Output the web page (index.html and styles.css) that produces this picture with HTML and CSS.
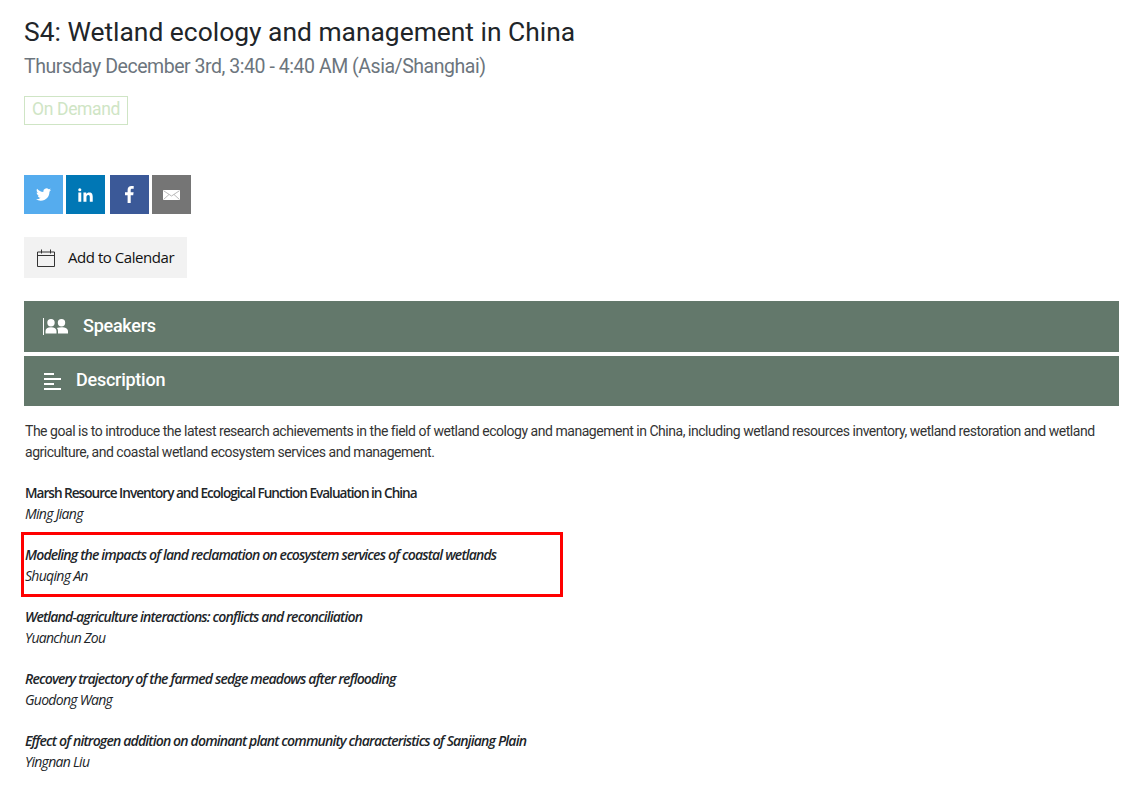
FILE: index.html
```html
<!DOCTYPE html>
<html lang="en">
<head>
  <meta charset="UTF-8">
  <title>S4: Wetland ecology and management in China</title>
  <link rel="stylesheet" href="styles.css">
</head>
<body>
  <div class="session">
    <h1 class="session-title">S4: Wetland ecology and management in China</h1>
    <p class="session-time">Thursday December 3rd, 3:40 - 4:40 AM (Asia/Shanghai)</p>
    <div><span class="tag">On Demand</span></div>

    <!-- Share buttons -->
    <div class="share">
      <a class="share-btn twitter" href="#">
        <svg viewBox="0 0 24 20" width="15" height="13"><path fill="#fff" d="M24 2.400c-.9.400-1.800.6-2.800.8 1-.6 1.800-1.600 2.200-2.700-1 .6-2 1-3.100 1.200A4.900 4.900 0 0 0 11.900 6.100C7.800 5.900 4.200 4 1.700.9c-1.300 2.200-.6 5.100 1.500 6.500-.8 0-1.500-.2-2.200-.6 0 2.300 1.600 4.400 3.900 4.900-.7.200-1.500.2-2.200.1.600 2 2.400 3.400 4.600 3.400A9.900 9.900 0 0 1 0 17.700 13.900 13.900 0 0 0 7.500 20c9.100 0 14.300-7.700 14-14.600 1-.7 1.800-1.600 2.500-3z"/></svg>
      </a>
      <a class="share-btn linkedin" href="#">
        <svg viewBox="0 0 22 20" width="15" height="14"><path fill="#fff" d="M.5 6.500h4.300V20H.5zM2.650 0a2.300 2.300 0 1 1 0 4.600 2.300 2.300 0 0 1 0-4.600zM8 6.500h4.100v1.900c.7-1.200 2.200-2.200 4.400-2.200 4.300 0 5.100 2.800 5.100 6.500V20h-4.300v-6.500c0-1.600-.1-3.600-2.200-3.600s-2.700 1.700-2.700 3.500V20H8z"/></svg>
      </a>
      <a class="share-btn facebook" href="#">
        <svg viewBox="0 0 9 17" width="9" height="17"><path fill="#fff" d="M2.600 17V9.300H0V6.300h2.600V4C2.600 1.500 4.100 0 6.500 0c1 0 1.900.1 2.200.1v2.700H7.200c-1.200 0-1.500.6-1.500 1.400v2.100h2.900l-.4 3H5.700V17z"/></svg>
      </a>
      <a class="share-btn email" href="#">
        <svg viewBox="0 0 17 10" width="17" height="10"><path fill="#fff" d="M0 0h17v10H0z"/><path fill="none" stroke="#a8a8a8" stroke-width=".8" d="M.5 .7 8.500 6 16.500 .7M.5 9.500 6 4.500M16.500 9.500 11 4.500"/></svg>
      </a>
    </div>

    <a class="calendar-btn" href="#">
      <svg viewBox="0 0 18 18" width="18" height="18"><path fill="none" stroke="#333" stroke-width="1" d="M.5 3h17v14.500H.5zM.5 6.500h17M4.500 .5v4M13.500 .5v4"/></svg>
      <span>Add to Calendar</span>
    </a>

    <!-- Collapsible sections -->
    <div class="panel-head speakers">
      <svg viewBox="0 0 25 17" width="25" height="17"><path fill="#fff" d="M0 0h1v17H0zM8 1a3.700 3.700 0 1 1 0 7.400A3.700 3.700 0 0 1 8 1zM18.500 1a3.700 3.700 0 1 1 0 7.400 3.700 3.700 0 0 1 0-7.400zM2.500 15.500V13c0-2.300 2-3.800 5.500-3.800s5.500 1.500 5.500 3.800v2.500zM15 15.500V13c0-1.300-.4-2.300-1.100-3.100 1.200-.5 2.800-.7 4.600-.7 3.800 0 6.500 1.400 6.500 3.800v2.500z"/></svg>
      <span>Speakers</span>
    </div>
    <div class="panel-head description">
      <svg viewBox="0 0 18 17" width="18" height="17"><path fill="#fff" d="M0 0h10v2H0zM0 5h17v2H0zM0 10h10v2H0zM0 15h17v2H0z"/></svg>
      <span>Description</span>
    </div>

    <div class="panel-body">
      <p class="intro">The goal is to introduce the latest research achievements in the field of wetland ecology and management in China, including wetland resources inventory, wetland restoration and wetland agriculture, and coastal wetland ecosystem services and management.</p>

      <div class="talk">
        <div class="talk-title">Marsh Resource Inventory and Ecological Function Evaluation in China</div>
        <div class="talk-author">Ming Jiang</div>
      </div>
      <div class="talk highlighted">
        <div class="talk-title slanted">Modeling the impacts of land reclamation on ecosystem services of coastal wetlands</div>
        <div class="talk-author">Shuqing An</div>
      </div>
      <div class="talk">
        <div class="talk-title slanted">Wetland-agriculture interactions: conflicts and reconciliation</div>
        <div class="talk-author">Yuanchun Zou</div>
      </div>
      <div class="talk">
        <div class="talk-title slanted">Recovery trajectory of the farmed sedge meadows after reflooding</div>
        <div class="talk-author">Guodong Wang</div>
      </div>
      <div class="talk">
        <div class="talk-title slanted">Effect of nitrogen addition on dominant plant community characteristics of Sanjiang Plain</div>
        <div class="talk-author">Yingnan Liu</div>
      </div>
    </div>
  </div>
</body>
</html>
```

FILE: styles.css
```css
* {
  margin: 0;
  padding: 0;
  box-sizing: border-box;
}
body {
  background: #fff;
  color: #212529;
  font-family: Roboto, sans-serif;
}
a {
  text-decoration: none;
}
.session {
  width: 1119px;
  padding: 16px 0 0 24px;
}
.session-title {
  font-size: 26.4px;
  font-weight: 400;
  line-height: 33px;
  color: #212529;
}
.session-time {
  font-size: 19.5px;
  line-height: 24px;
  margin-top: 6px;
  letter-spacing: -0.46px;
  color: #6c757d;
}
/* Status tag */
.tag {
  display: inline-block;
  margin-top: 17px;
  padding: 0 7px;
  height: 29px;
  line-height: 25px;
  font-size: 17.5px;
  letter-spacing: -0.35px;
  color: #cfe5c5;
  border: 1px solid #cfe5c5;
}
.share {
  display: flex;
  gap: 3px;
  margin-top: 50px;
}
.share-btn {
  width: 39px;
  height: 39px;
  display: flex;
  align-items: center;
  justify-content: center;
}
.twitter { background: #55acee; }
.linkedin { background: #0077b5; }
.facebook { background: #3b5998; margin-left: 2px; }
.email { background: #757575; }
.calendar-btn {
  display: inline-flex;
  align-items: center;
  gap: 13px;
  height: 41px;
  margin-top: 23px;
  padding: 0 13px;
  background: #f2f2f2;
  color: #111;
  font-family: "Open Sans", sans-serif;
  font-size: 15px;
  letter-spacing: -0.45px;
}
.calendar-btn span {
  padding-bottom: 2px;
}
.panel-head {
  display: flex;
  align-items: center;
  gap: 15px;
  height: 50px;
  padding-left: 20px;
  margin-bottom: 4px;
  background: #63786b;
  color: #fff;
  font-size: 18px;
  font-weight: 500;
  letter-spacing: -0.25px;
}
.panel-head span {
  padding-bottom: 2px;
}
.panel-head.speakers {
  height: 51px;
  margin-top: 23px;
}
.panel-head.speakers svg {
  margin-left: -1px;
}
.panel-head.description {
  gap: 14px;
}
.panel-head.description span {
  padding-bottom: 4px;
}
.panel-body {
  padding-top: 11px;
}
.intro {
  font-size: 14px;
  line-height: 21px;
  letter-spacing: -0.47px;
  color: #333;
  padding-left: 1px;
  margin-bottom: 19px;
}
.talk {
  padding-left: 1px;
  margin-bottom: 20px;
  font-family: "Open Sans", sans-serif;
  font-size: 14px;
  line-height: 21px;
  letter-spacing: -0.7px;
  color: #212529;
}
.talk-title {
  font-size: 13.6px;
  font-weight: 600;
  letter-spacing: -1px;
}
.talk-title.slanted {
  font-size: 14px;
  font-style: italic;
  letter-spacing: -0.83px;
}
.talk-author {
  font-style: italic;
}
/* Red annotation box drawn over the second talk */
.highlighted {
  position: relative;
}
.highlighted::after {
  content: "";
  box-sizing: border-box;
  position: absolute;
  left: -3px;
  top: -12px;
  width: 542px;
  height: 65px;
  border: 3px solid #f00;
}
```
